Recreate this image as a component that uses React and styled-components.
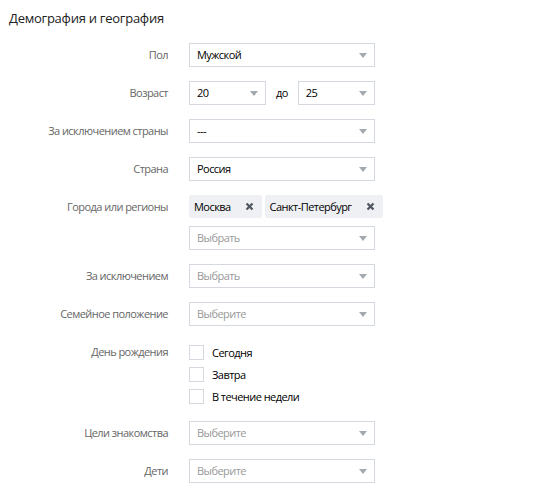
import React from 'react';
import styled, { createGlobalStyle } from 'styled-components';

const GlobalStyle = createGlobalStyle`
    body {
        margin: 0;
        background: #fff;
        font-family: "Open Sans", "Liberation Sans", sans-serif;
        font-size: 11px;
        letter-spacing: -0.55px;
        color: #000;
    }
`;

const Page = styled.div`
    width: 537px;
    height: 489px;
    padding: 9px 0 0 9px;
    box-sizing: border-box;
`;

const Title = styled.div`
    font-size: 13px;
    letter-spacing: -0.25px;
    line-height: 18px;
    color: #222;
`;

const Form = styled.div`
    display: flex;
    flex-direction: column;
    margin-top: 16px;
    margin-left: -9px;
`;

const Row = styled.div`
    display: grid;
    grid-template-columns: 168px 186px;
    column-gap: 21px;
    margin-top: ${props => props.gap ?? 14}px;
    &:first-child {
        margin-top: 0;
    }
`;

const Label = styled.div`
    text-align: right;
    color: #666;
    line-height: 24px;
    white-space: nowrap;
`;

const Field = styled.div`
    display: flex;
    flex-direction: column;
    gap: 8px;
`;

const SelectBox = styled.div`
    position: relative;
    height: 24px;
    box-sizing: border-box;
    border: 1px solid #d3d9de;
    background: #fff;
    padding: 0 24px 0 7px;
    line-height: 22px;
    width: ${props => props.width ? props.width + 'px' : '100%'};
    color: ${props => props.placeholder ? '#999' : '#000'};

    &::after {
        content: '';
        position: absolute;
        right: 7px;
        top: 9px;
        border-left: 4px solid transparent;
        border-right: 4px solid transparent;
        border-top: 5px solid #a3a9b0;
    }
`;

const Inline = styled.div`
    display: flex;
    align-items: center;
`;

const To = styled.span`
    margin: 0 10px 0 10px;
    line-height: 24px;
`;

const Tags = styled.div`
    display: flex;
    gap: 3px;
    white-space: nowrap;
`;

const Tag = styled.div`
    display: flex;
    align-items: center;
    height: 23px;
    padding: 0 8px 0 5px;
    background: #eef0f3;
    border-radius: 2px;
    color: #000;
`;

const Remove = styled.span`
    margin-left: 14px;
    display: flex;
    color: #4f5660;
`;

const Options = styled.div`
    display: flex;
    flex-direction: column;
    padding-top: 1px;
`;

const Option = styled.label`
    display: flex;
    align-items: center;
    height: 22px;
`;

const Box = styled.span`
    width: 15px;
    height: 15px;
    box-sizing: border-box;
    border: 1px solid #d3d9de;
    background: #fff;
    margin-right: 8px;
`;

const Cross = () => (
    <svg width="9" height="9" viewBox="0 0 9 9">
        <path d="M1.5 1.5 L7.5 7.5 M7.5 1.5 L1.5 7.5" stroke="currentColor" strokeWidth="2.2" />
    </svg>
);

const App = () => {
    return (
        <Page>
            <GlobalStyle />
            <Title>Демография и география</Title>

            <Form>
                <Row>
                    <Label>Пол</Label>
                    <Field><SelectBox>Мужской</SelectBox></Field>
                </Row>

                <Row>
                    <Label>Возраст</Label>
                    <Inline>
                        <SelectBox width={77}>20</SelectBox>
                        <To>до</To>
                        <SelectBox width={77}>25</SelectBox>
                    </Inline>
                </Row>

                <Row>
                    <Label>За исключением страны</Label>
                    <Field><SelectBox>---</SelectBox></Field>
                </Row>

                <Row>
                    <Label>Страна</Label>
                    <Field><SelectBox>Россия</SelectBox></Field>
                </Row>

                <Row>
                    <Label>Города или регионы</Label>
                    <Field>
                        <Tags>
                            <Tag>Москва<Remove><Cross /></Remove></Tag>
                            <Tag>Санкт-Петербург<Remove><Cross /></Remove></Tag>
                        </Tags>
                        <SelectBox placeholder="true">Выбрать</SelectBox>
                    </Field>
                </Row>

                <Row>
                    <Label>За исключением</Label>
                    <Field><SelectBox placeholder="true">Выбрать</SelectBox></Field>
                </Row>

                <Row>
                    <Label>Семейное положение</Label>
                    <Field><SelectBox placeholder="true">Выберите</SelectBox></Field>
                </Row>

                <Row>
                    <Label>День рождения</Label>
                    <Options>
                        <Option><Box />Сегодня</Option>
                        <Option><Box />Завтра</Option>
                        <Option><Box />В течение недели</Option>
                    </Options>
                </Row>

                <Row gap={14}>
                    <Label>Цели знакомства</Label>
                    <Field><SelectBox placeholder="true">Выберите</SelectBox></Field>
                </Row>

                <Row>
                    <Label>Дети</Label>
                    <Field><SelectBox placeholder="true">Выберите</SelectBox></Field>
                </Row>
            </Form>
        </Page>
    );
};

export default App;
